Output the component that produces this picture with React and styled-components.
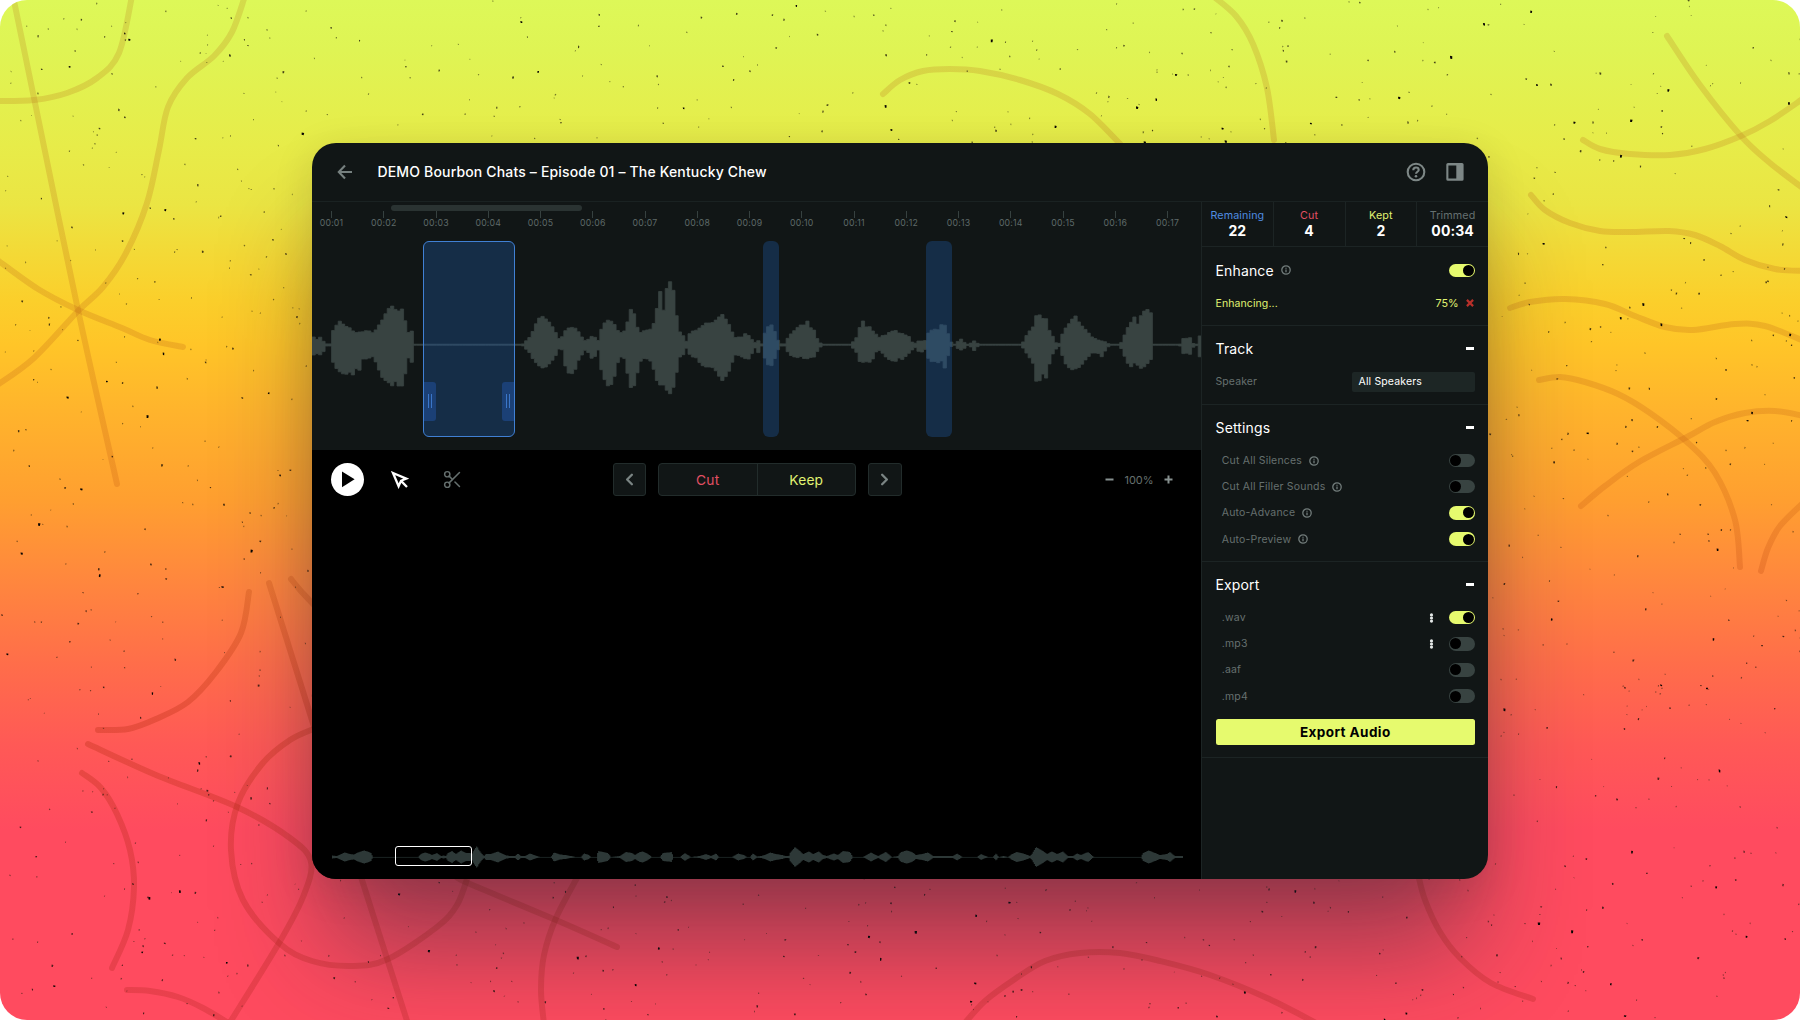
import React from "react";
import styled, { createGlobalStyle } from "styled-components";
import { Scissors, ChevronLeft, ChevronRight } from "lucide-react";

/* ---------- data ---------- */

const times = Array.from({ length: 17 }, (_, i) => `00:${String(i + 1).padStart(2, "0")}`);

// [x, height above the line, height below the line]
const wave = [
  [0, 8, 10], [3, 8, 10], [6, 4, 8], [8, 8, 10], [12, 3, 6], [14, 1, 1], [19, 1, 1],
  [20, 12, 14], [23, 18, 22], [28, 24, 27], [33, 19, 30], [38, 17, 27], [41, 14, 30], [45, 12, 22], [47, 13, 27],
  [50, 13, 14], [56, 15, 14], [60, 12, 11], [63, 14, 15], [67, 20, 25], [71, 26, 34], [76, 36, 37], [80, 39, 41],
  [83, 36, 36], [86, 33, 41], [88, 36, 41], [91, 36, 41], [93, 25, 30], [96, 12, 12], [99, 15, 18], [101, 12, 16],
  [102.5, 0, 0], [210, 0, 0],
  [213, 3, 3], [218, 8, 8], [221, 14, 14], [226, 26, 20], [230, 29, 23], [234, 26, 22], [238, 22, 18], [243, 14, 12],
  [246, 6, 4], [250, 8, 4], [253, 14, 20], [258, 18, 31], [263, 17, 25], [266, 14, 16], [271, 6, 8], [274, 4, 4],
  [278, 7, 10], [281, 10, 16], [285, 5, 6], [286, 4, 4], [288, 12, 20], [291, 20, 30], [295, 25, 41], [299, 24, 40],
  [303, 20, 30], [307, 12, 12], [312, 13, 12], [314, 20, 22], [316, 24, 30], [318, 34, 42], [321, 40, 44],
  [323, 24, 38], [326, 16, 25], [329, 12, 15], [333, 15, 13], [338, 15, 15], [342, 22, 25], [344, 36, 33],
  [346, 37, 38], [348, 54, 40], [350, 50, 40], [352, 30, 40], [354, 52, 43], [356.5, 66, 50], [360, 60, 47],
  [362, 52, 40], [364, 36, 34], [366, 14, 12], [368, 13, 12], [370, 19, 20], [372, 2, 2], [374, 2, 2],
  [376, 10, 8], [381, 14, 12], [385, 15, 13], [389, 18, 20], [394, 22, 22], [400, 22, 22], [404, 25, 26],
  [410, 31, 36], [415, 24, 30], [419, 17, 22], [422, 7, 10], [426, 8, 10], [430, 8, 12], [434, 12, 14],
  [438, 8, 14], [441, 4, 5], [444, 2, 2], [446, 5, 9], [448, 1, 1], [450, 1, 1],
  [451, 8, 8], [454, 14, 16], [458, 22, 23], [461, 18, 18], [464, 10, 10], [467, 2, 2],
  [472, 0, 0], [474, 4, 4], [478, 10, 10], [485, 17, 13], [488, 20, 11], [493, 20, 14], [495, 25, 14], [498, 17, 12],
  [501, 18, 14], [504, 8, 8], [507, 4, 4], [510, 0, 0], [539, 0, 0],
  [541, 3, 3], [545, 8, 8], [547, 14, 16], [550, 28, 18], [553, 16, 16], [556, 21, 18], [560, 14, 16], [563, 14, 8],
  [566, 5, 5], [569, 11, 6], [572, 8, 10], [576, 12, 14], [583, 15, 17], [587, 12, 13], [589, 14, 16], [592, 8, 12],
  [595, 12, 11], [597, 8, 8], [600, 3, 5], [602, 0, 0], [605, 4, 6], [610, 4, 7], [612, 1, 1],
  [615, 10, 10], [618, 14, 17], [622, 16, 16], [626, 15, 18], [629, 20, 14], [632, 22, 26], [635, 13, 14],
  [638, 8, 4], [640, 0, 0], [643, 0, 0], [645, 3, 3], [649, 6, 5], [653, 2, 3], [656, 0, 0], [659, 2, 2],
  [661, 5, 7], [665, 2, 2], [668, 0, 0], [710, 0, 0],
  [712, 5, 5], [716, 12, 10], [721, 18, 18], [724, 29, 36], [727, 32, 38], [730, 22, 26], [733, 38, 37],
  [735, 17, 30], [738, 14, 16], [741, 8, 8], [744, 2, 4], [747, 1, 1], [749, 8, 6], [753, 16, 18], [759, 24, 25],
  [763, 30, 24], [768, 21, 22], [774, 15, 14], [780, 8, 8], [786, 5, 8], [790, 4, 12], [794, 3, 4], [798, 0, 0],
  [808, 0, 0], [811, 6, 8], [815, 16, 16], [818, 21, 24], [820, 24, 20], [822, 32, 18], [824, 12, 18],
  [827, 28, 22], [830, 30, 24], [834, 37, 20], [838, 33, 16], [839, 32, 14], [840, 0, 0], [868, 0, 0],
  [870, 8, 11], [873, 5, 6], [877, 9, 11], [880, 4, 6], [882, 0, 0], [886, 1, 1], [888, 10, 13], [890, 10, 13],
];

// [x, half height]
const overview = [
  [0, 1.5], [5, 1], [9, 3], [13, 4.5], [18, 3], [22, 2.5], [26, 4.5], [32, 6.5], [37, 5], [39, 4], [41, 0], [86, 0],
  [89, 3], [93, 4.5], [98, 3], [100, 2], [105, 4], [109, 1], [112, 1.5], [114, 1], [116, 4], [120, 6], [124, 3],
  [129, 6.5], [134, 4], [138, 4], [140, 3], [142, 7], [145, 11], [147, 7], [150, 3], [152, 1], [154, 3], [159, 3],
  [166, 5.5], [171, 3], [174, 1.5], [179, 1], [183, 1], [186, 3.5], [189, 1], [193, 1], [198, 3.5], [205, 1], [208, 0],
  [219, 0], [222, 4.5], [228, 2.5], [233, 2], [239, 1], [244, 0], [249, 0], [252, 3.5], [257, 2], [259, 0], [265, 0],
  [266, 6], [271, 5], [276, 4], [279, 0], [288, 1], [294, 5], [300, 4], [303, 2], [308, 5], [311, 5.5], [316, 3],
  [320, 0], [328, 0], [331, 4], [336, 4.5], [340, 5], [341, 0], [348, 0], [353, 4], [359, 0], [368, 1],
  [374, 3], [379, 1], [384, 3.5], [387, 0], [400, 0], [406, 3.5], [412, 2], [415, 0], [418, 0], [421, 3.5], [425, 0.5],
  [429, 1], [433, 2], [438, 4.5], [444, 3], [450, 2], [454, 1], [457, 1], [458, 4], [463, 10], [468, 6], [471, 3],
  [477, 5.5], [481, 3], [487, 5.5], [491, 2], [495, 1], [502, 3.5], [506, 2], [511, 6], [518, 5], [521, 0], [531, 0],
  [539, 4.5], [546, 1], [554, 5], [560, 0], [566, 1], [569, 5], [575, 6.5], [580, 5], [584, 2], [590, 3], [596, 4.5],
  [601, 1], [613, 1], [621, 1], [625, 3.5], [629, 1], [631, 0], [645, 0], [649, 3], [656, 0], [661, 0], [664, 3.5],
  [667, 0], [672, 1], [676, 0], [680, 3], [685, 5], [693, 3], [698, 1], [700, 3], [704, 10], [711, 6], [715, 3],
  [720, 5.5], [725, 3], [731, 5.5], [736, 1], [741, 1], [745, 3.5], [749, 2], [756, 5], [762, 0], [809, 0], [811, 4],
  [817, 6.5], [823, 4], [828, 2], [835, 3], [838, 5], [843, 1], [847, 1], [851, 1],
].map(([x, h]) => [x, h, h]);

const squiggles = [
  [[13, -4], [34, 98], [78, 310], [117, 484]],
  [[132, -4], [119, 53], [97, 78], [67, 93], [34, 100], [-4, 101]],
  [[245, -4], [232, 32], [214, 56], [187, 78], [168, 107], [159, 150], [147, 203], [126, 253], [103, 287], [78, 311], [34, 358], [-4, 386]],
  [[-4, 259], [38, 289], [78, 310], [122, 328], [150, 340], [183, 347]],
  [[249, 592], [241, 633], [216, 672], [188, 702], [156, 719], [128, 729], [98, 730]],
  [[269, 583], [311, 717], [362, 880], [408, 1024]],
  [[291, 579], [300, 590], [314, 605]],
  [[88, 744], [156, 775], [237, 807], [290, 838], [311, 862], [303, 897], [279, 943], [229, 1024]],
  [[316, 728], [290, 740], [262, 764], [238, 803], [231, 850], [243, 900], [279, 943], [312, 961], [353, 966], [388, 959], [437, 927], [457, 905], [468, 876]],
  [[82, 773], [101, 788], [117, 814], [130, 850], [134, 887], [128, 930], [112, 968]],
  [[127, 990], [150, 991], [178, 997], [203, 1008], [230, 1024]],
  [[455, 876], [470, 884], [556, 920], [617, 947]],
  [[578, 876], [556, 918], [544, 955], [541, 990], [544, 1024]],
  [[883, 94], [900, 80], [923, 71], [950, 69], [980, 71], [1020, 80], [1058, 94], [1090, 114], [1122, 146]],
  [[1213, -4], [1236, 16], [1253, 44], [1267, 88], [1274, 140]],
  [[1667, 36], [1700, 85], [1741, 136], [1770, 163], [1804, 189]],
  [[1583, 140], [1600, 149], [1630, 154], [1670, 155], [1705, 149], [1741, 136], [1770, 121], [1804, 98]],
  [[1531, 195], [1545, 210], [1570, 223], [1600, 231], [1630, 232], [1669, 231], [1695, 235], [1720, 246], [1745, 260], [1775, 269], [1804, 271]],
  [[1510, 308], [1530, 302], [1565, 299], [1605, 304], [1635, 316], [1665, 327], [1693, 330], [1735, 324], [1765, 326], [1804, 341]],
  [[1539, 380], [1560, 377], [1585, 382], [1618, 394], [1650, 413], [1687, 442], [1715, 473], [1735, 520], [1740, 567]],
  [[1581, 506], [1605, 486], [1639, 462], [1687, 437], [1715, 422], [1745, 413], [1775, 411], [1804, 416]],
  [[1761, 571], [1768, 548], [1780, 526], [1804, 502]],
  [[964, 1024], [985, 1001], [1015, 979], [1045, 961], [1080, 953], [1120, 953], [1160, 961], [1210, 975], [1267, 998], [1318, 1024]],
  [[1418, 874], [1425, 900], [1440, 932], [1460, 958], [1491, 983], [1533, 999]],
];

const stats = [
  { label: "Remaining", value: "22", color: "#4f8ce0" },
  { label: "Cut", value: "4", color: "#e04f63" },
  { label: "Kept", value: "2", color: "#e0f272" },
  { label: "Trimmed", value: "00:34", color: "#657070" },
];

const settings = [
  { label: "Cut All Silences", on: false },
  { label: "Cut All Filler Sounds", on: false },
  { label: "Auto-Advance", on: true },
  { label: "Auto-Preview", on: true },
];

const formats = [
  { label: ".wav", on: true, more: true },
  { label: ".mp3", on: false, more: true },
  { label: ".aaf", on: false },
  { label: ".mp4", on: false },
];

/* ---------- path helpers ---------- */

const sample = (points, x) => {
  for (let i = 1; i < points.length; i++) {
    const [x0, u0, d0] = points[i - 1];
    const [x1, u1, d1] = points[i];
    if (x <= x1) {
      const t = (x - x0) / (x1 - x0);
      return [u0 + (u1 - u0) * t, d0 + (d1 - d0) * t];
    }
  }
  return [0, 0];
};

const steppedPath = (points, width, step, mid) => {
  let top = "";
  let bottom = "";
  for (let x = 0; x < width; x += step) {
    const [u, d] = sample(points, x + step / 2);
    const a = x.toFixed(1);
    const b = (x + step).toFixed(1);
    top += `L${a} ${(mid - u).toFixed(1)}L${b} ${(mid - u).toFixed(1)}`;
    bottom = `L${b} ${(mid + d).toFixed(1)}L${a} ${(mid + d).toFixed(1)}` + bottom;
  }
  return `M0 ${mid}${top}${bottom}Z`;
};

const smoothPath = (p) => {
  let d = `M${p[0][0]} ${p[0][1]}`;
  for (let i = 0; i < p.length - 1; i++) {
    const a = p[i - 1] || p[i];
    const b = p[i];
    const c = p[i + 1];
    const e = p[i + 2] || c;
    d += `C${b[0] + (c[0] - a[0]) / 6} ${b[1] + (c[1] - a[1]) / 6} ${c[0] - (e[0] - b[0]) / 6} ${c[1] - (e[1] - b[1]) / 6} ${c[0]} ${c[1]}`;
  }
  return d;
};

const specks = (count, size, seed) => {
  let s = seed;
  const rnd = () => {
    s = (s * 16807) % 2147483647;
    return s / 2147483647;
  };
  let d = "";
  for (let i = 0; i < count; i++) {
    const w = size * (0.7 + rnd() * 0.6);
    const h = size * (0.7 + rnd() * 0.7);
    d += `M${(rnd() * 1800).toFixed(1)} ${(rnd() * 1020).toFixed(1)}l${w.toFixed(1)} ${(rnd() * 0.6).toFixed(1)}l${(-rnd() * 0.7).toFixed(1)} ${h.toFixed(1)}l${(-w * 0.8).toFixed(1)} ${(-rnd() * 0.5).toFixed(1)}z`;
  }
  return d;
};

const wavePath = steppedPath(wave, 890, 3.27, 117);
const overviewPath = steppedPath(overview, 851, 1.1, 12);
const fineSpecks = specks(1250, 1.1, 7919);
const midSpecks = specks(640, 1.5, 104729);
const boldSpecks = specks(190, 1.9, 31337);

/* ---------- icons ---------- */

const BackIcon = () => (
  <svg width="16" height="16" viewBox="0 0 16 16" fill="none" stroke="#76807f" strokeWidth="2.1">
    <path d="M15 8H2.5M8 1.6L1.8 8L8 14.4" />
  </svg>
);

const HelpIcon = () => (
  <svg width="20" height="20" viewBox="0 0 20 20" fill="none" stroke="#7d8786" strokeWidth="2.1">
    <circle cx="10" cy="10" r="8.3" />
    <path d="M7.3 8.2C7.3 6.5 8.5 5.5 10 5.5S12.7 6.5 12.7 7.9C12.7 9.6 10 9.9 10 11.8" />
    <circle cx="10" cy="14.2" r="1.3" fill="#7d8786" stroke="none" />
  </svg>
);

const PanelIcon = () => (
  <svg width="18" height="18" viewBox="0 0 18 18">
    <path fillRule="evenodd" fill="#7d8786" d="M2 0H16Q17.6 0 17.6 1.6V16.2Q17.6 17.8 16 17.8H2Q.3 17.8 .3 16.2V1.6Q.3 0 2 0ZM2.4 2.4V15.4H10.3V2.4Z" />
  </svg>
);

const InfoIcon = () => (
  <svg width="10" height="10" viewBox="0 0 10 10" fill="none" stroke="#727c7b" strokeWidth="1.3">
    <circle cx="5" cy="5" r="4.2" />
    <path d="M5 4.5V7.3M5 2.7V3.8" />
  </svg>
);

const MoreIcon = () => (
  <svg width="5" height="10" viewBox="0 0 5 10" fill="#e4e8e7">
    <circle cx="2.5" cy="1.9" r="1.6" />
    <circle cx="2.5" cy="5" r="1.6" />
    <circle cx="2.5" cy="8.1" r="1.6" />
  </svg>
);

const CloseIcon = () => (
  <svg width="8" height="8" viewBox="0 0 8 8" stroke="#b8302a" strokeWidth="2.2">
    <path d="M.9 .9L7.1 7.1M7.1 .9L.9 7.1" />
  </svg>
);

const PlayIcon = () => (
  <svg width="13" height="17" viewBox="0 0 13 17">
    <path d="M0 .4L12.6 8.3L0 16.2Z" />
  </svg>
);

const CursorIcon = () => (
  <svg width="18" height="18" viewBox="0 0 18 18" fill="none" stroke="#fff" strokeWidth="2.3">
    <path d="M2 2L15.2 7.6L10 9.8L7.6 15.2ZM9.8 9.6L16 16" />
  </svg>
);

const StepIcon = ({ plus }) => (
  <svg width="9" height="9" viewBox="0 0 9 9" stroke="#879190" strokeWidth="2">
    <path d={plus ? "M.5 4.5H8.5M4.5 .5V8.5" : "M.5 4.5H8.5"} />
  </svg>
);

/* ---------- parts ---------- */

const Switch = ({ on }) => (
  <Toggle $on={on}>
    <Knob />
  </Toggle>
);

const Section = ({ title, info, toggle, children }) => (
  <Panel>
    <PanelHead>
      <PanelTitle>{title}</PanelTitle>
      {info && <InfoIcon />}
      <Spacer />
      {toggle ? <Switch on /> : <Dash />}
    </PanelHead>
    {children}
  </Panel>
);

const Backdrop = () => (
  <Art viewBox="0 0 1800 1020">
    <defs>
      <linearGradient id="ink" gradientUnits="userSpaceOnUse" x1="0" y1="0" x2="0" y2="1020">
        <stop offset="0" stopColor="#b88020" stopOpacity=".24" />
        <stop offset=".5" stopColor="#c85c10" stopOpacity=".26" />
        <stop offset=".7" stopColor="#b82c10" stopOpacity=".32" />
        <stop offset="1" stopColor="#a82018" stopOpacity=".25" />
      </linearGradient>
    </defs>
    <g fill="none" stroke="url(#ink)" strokeWidth="6" strokeLinecap="round">
      {squiggles.map((points, i) => (
        <path key={i} d={smoothPath(points)} />
      ))}
    </g>
    <path d={fineSpecks} fill="#1c1808" opacity=".55" />
    <path d={midSpecks} fill="#140c04" opacity=".75" />
    <path d={boldSpecks} fill="#080402" />
  </Art>
);

const App = () => {
  return (
    <Page>
      <GlobalStyle />
      <Backdrop />
      <Window>
        <Header>
          <BackIcon />
          <Title>DEMO Bourbon Chats – Episode 01 – The Kentucky Chew</Title>
          <Spacer />
          <HeaderIcons>
            <HelpIcon />
            <PanelIcon />
          </HeaderIcons>
        </Header>
        <Body>
          <Editor>
            <WavePanel>
              <Ruler>
                <ScrollThumb />
                <Ticks>
                  {times.map((t) => (
                    <Tick key={t}>{t}</Tick>
                  ))}
                </Ticks>
              </Ruler>
              <Track>
                <svg width="889" height="221" viewBox="0 0 889 221">
                  <path d="M0 116.5H889" stroke="#384341" strokeWidth="1.5" />
                  <path d={wavePath} fill="#384341" stroke="#384341" strokeWidth=".8" strokeLinejoin="round" />
                </svg>
                <Region $x={451} $w={16} />
                <Region $x={614} $w={26} />
                <Region $x={111} $w={92} $active>
                  <Handle $side="left" />
                  <Handle $side="right" />
                </Region>
              </Track>
            </WavePanel>
            <Toolbar>
              <Tools>
                <PlayButton>
                  <PlayIcon />
                </PlayButton>
                <CursorIcon />
                <Scissors size={21} color="#66706f" strokeWidth={1.7} />
              </Tools>
              <Decide>
                <NavButton>
                  <ChevronLeft size={19} strokeWidth={3} />
                </NavButton>
                <Choice>
                  <Option $color="#e04f63">Cut</Option>
                  <Option $color="#e0f272">Keep</Option>
                </Choice>
                <NavButton>
                  <ChevronRight size={19} strokeWidth={3} />
                </NavButton>
              </Decide>
              <Zoom>
                <StepIcon />
                <ZoomValue>100%</ZoomValue>
                <StepIcon plus />
              </Zoom>
            </Toolbar>
            <Spacer />
            <Overview>
              <svg width="851" height="24" viewBox="0 0 851 24">
                <path d="M0 12.4H851" stroke="#1a2322" strokeWidth="1" />
                <path d={overviewPath} fill="#2d3837" />
              </svg>
              <Viewport />
            </Overview>
          </Editor>
          <Sidebar>
            <Stats>
              {stats.map((s) => (
                <Stat key={s.label}>
                  <StatLabel $color={s.color}>{s.label}</StatLabel>
                  <StatValue>{s.value}</StatValue>
                </Stat>
              ))}
            </Stats>
            <Section title="Enhance" info toggle>
              <EnhanceRow>
                Enhancing...
                <Spacer />
                <Percent>75%</Percent>
                <CloseIcon />
              </EnhanceRow>
            </Section>
            <Section title="Track">
              <SpeakerRow>
                Speaker
                <Spacer />
                <Select>All Speakers</Select>
              </SpeakerRow>
            </Section>
            <Section title="Settings">
              {settings.map((s) => (
                <OptionRow key={s.label}>
                  {s.label}
                  <InfoIcon />
                  <Spacer />
                  <Switch on={s.on} />
                </OptionRow>
              ))}
            </Section>
            <Section title="Export">
              {formats.map((f) => (
                <OptionRow key={f.label}>
                  {f.label}
                  <Spacer />
                  {f.more && <MoreIcon />}
                  <Switch on={f.on} />
                </OptionRow>
              ))}
              <ExportButton>Export Audio</ExportButton>
            </Section>
          </Sidebar>
        </Body>
      </Window>
    </Page>
  );
};

export default App;

const GlobalStyle = createGlobalStyle`
  * {
    box-sizing: border-box;
  }
  body {
    margin: 0;
    background: #fff;
    font-family: Inter, "Liberation Sans", sans-serif;
  }
  svg {
    display: block;
    flex: none;
  }
`;

const Page = styled.div`
  position: relative;
  width: 1800px;
  height: 1020px;
  padding: 142.5px 312px 0;
  border-radius: 27px;
  overflow: hidden;
  background: linear-gradient(
    #ddf858 0,
    #dff454 50px,
    #e7ec49 145px,
    #ebe543 205px,
    #f3da37 250px,
    #fbcf2b 300px,
    #ffc528 345px,
    #ffb42c 410px,
    #ff9f30 500px,
    #ff8a3c 570px,
    #ff6d4a 665px,
    #ff5956 745px,
    #ff4b5f 830px,
    #ff4b5f 1020px
  );
`;
const Art = styled.svg`
  position: absolute;
  inset: 0;
  width: 1800px;
  height: 1020px;
`;

const Window = styled.div`
  position: relative;
  width: 1176px;
  height: 736.5px;
  display: flex;
  flex-direction: column;
  border-radius: 24px;
  overflow: hidden;
  background: #111616;
  color: #fff;
  box-shadow: 0 84px 110px -16px rgba(28, 34, 54, 0.44), 0 10px 40px rgba(40, 30, 20, 0.14);
`;

const Header = styled.div`
  height: 59px;
  flex: none;
  display: flex;
  align-items: center;
  padding: 0 24px 0 25px;
  border-bottom: 1.5px solid #1a2222;
`;
const Title = styled.div`
  margin-left: 24.5px;
  font-size: 14px;
  font-weight: 500;
  letter-spacing: 0.16px;
`;
const HeaderIcons = styled.div`
  display: flex;
  align-items: center;
  gap: 20px;
`;
const Spacer = styled.div`
  flex: 1;
`;

const Body = styled.div`
  flex: 1;
  min-height: 0;
  display: flex;
`;
const Editor = styled.div`
  width: 889px;
  flex: none;
  display: flex;
  flex-direction: column;
  background: #000;
`;
const WavePanel = styled.div`
  height: 248.5px;
  background: #111616;
  overflow: hidden;
`;
const Ruler = styled.div`
  height: 26.5px;
  padding-top: 3px;
`;
const ScrollThumb = styled.div`
  width: 191px;
  height: 6.5px;
  margin-left: 78.5px;
  border-radius: 3px;
  background: #2a3332;
`;
const Ticks = styled.div`
  display: flex;
  margin-left: -6.6px;
`;
const Tick = styled.div`
  width: 52.26px;
  flex: none;
  display: flex;
  flex-direction: column;
  align-items: center;
  font-size: 8.75px;
  line-height: 11px;
  letter-spacing: 0.2px;
  color: #5f6a69;

  &::before {
    content: "";
    width: 1px;
    height: 6.5px;
    background: #364140;
  }
`;
const Track = styled.div`
  position: relative;
  height: 221px;
`;
const Region = styled.div`
  position: absolute;
  top: 13px;
  left: ${(p) => p.$x}px;
  width: ${(p) => p.$w}px;
  height: 196px;
  border-radius: 6px;
  background: rgba(30, 91, 166, 0.34);
  border: ${(p) => (p.$active ? "1.5px solid #4080d4" : "none")};
  overflow: hidden;
`;
const Handle = styled.div`
  position: absolute;
  top: 139.5px;
  ${(p) => p.$side}: 0;
  width: 12px;
  height: 39.5px;
  display: flex;
  justify-content: center;
  align-items: center;
  gap: 2px;
  border-radius: ${(p) => (p.$side === "left" ? "0 3px 3px 0" : "3px 0 0 3px")};
  background: #1b4076;

  &::before,
  &::after {
    content: "";
    width: 1px;
    height: 14px;
    background: #3b76c8;
  }
`;

const Toolbar = styled.div`
  height: 59px;
  display: grid;
  grid-template-columns: 1fr auto 1fr;
  align-items: center;
  padding: 0 28px 0 19px;
`;
const Tools = styled.div`
  display: flex;
  align-items: center;

  svg + svg {
    margin-left: 33px;
  }
`;
const PlayButton = styled.div`
  width: 33px;
  height: 33px;
  margin-right: 26.5px;
  padding-left: 2px;
  display: flex;
  align-items: center;
  justify-content: center;
  border-radius: 50%;
  background: #fff;
`;
const Decide = styled.div`
  display: flex;
  gap: 12px;
  margin-left: 10px;
`;
const NavButton = styled.div`
  width: 33.5px;
  height: 33.5px;
  display: flex;
  align-items: center;
  justify-content: center;
  border: 1.5px solid #222c2b;
  border-radius: 3px;
  background: #111616;
  color: #7a8483;
`;
const Choice = styled.div`
  width: 198px;
  display: flex;
  border: 1.5px solid #222c2b;
  border-radius: 4px;
  background: #111616;
`;
const Option = styled.div`
  flex: 1;
  display: flex;
  align-items: center;
  justify-content: center;
  font-size: 13.75px;
  letter-spacing: 0.2px;
  color: ${(p) => p.$color};

  & + & {
    border-left: 1px solid #222c2b;
  }
`;
const Zoom = styled.div`
  display: flex;
  align-items: center;
  justify-content: flex-end;
  gap: 9.5px;
`;
const ZoomValue = styled.div`
  width: 31px;
  text-align: center;
  font-size: 11px;
  letter-spacing: -0.1px;
  color: #66706f;
`;

const Overview = styled.div`
  position: relative;
  padding: 0 19px 10px 20px;
`;
const Viewport = styled.div`
  position: absolute;
  left: 82.5px;
  top: 1px;
  width: 77.5px;
  height: 20px;
  border: 1.5px solid #fff;
  border-radius: 3px;
`;

const Sidebar = styled.div`
  flex: 1;
  display: flex;
  flex-direction: column;
  border-left: 1px solid #1c2424;
`;
const Stats = styled.div`
  height: 45.75px;
  flex: none;
  display: flex;
  border-bottom: 1px solid #1c2424;
`;
const Stat = styled.div`
  flex: 1;
  min-width: 0;
  display: flex;
  flex-direction: column;
  align-items: center;
  padding-top: 6px;

  & + & {
    border-left: 1px solid #1c2424;
  }
`;
const StatLabel = styled.div`
  font-size: 10.75px;
  line-height: 15px;
  letter-spacing: 0.1px;
  color: ${(p) => p.$color};
`;
const StatValue = styled.div`
  font-size: 14px;
  font-weight: 700;
  line-height: 16px;
  letter-spacing: 0.1px;
`;

const Panel = styled.div`
  padding: 7px 13px 8.5px 13.5px;
  border-bottom: 1px solid #1c2424;
`;
const PanelHead = styled.div`
  height: 32px;
  margin-bottom: 4px;
  display: flex;
  align-items: center;
  gap: 7px;
`;
const PanelTitle = styled.div`
  font-size: 14px;
  letter-spacing: 0.15px;
`;
const Dash = styled.div`
  width: 8px;
  height: 3px;
  margin-right: 1px;
  background: #fff;
`;
const Toggle = styled.div`
  width: 26px;
  height: 13.5px;
  padding: 1.25px;
  display: flex;
  flex: none;
  justify-content: ${(p) => (p.$on ? "flex-end" : "flex-start")};
  border-radius: 7px;
  background: ${(p) => (p.$on ? "#e6fa6e" : "#384341")};
`;
const Knob = styled.div`
  width: 11px;
  height: 11px;
  border-radius: 50%;
  background: #000;
`;

const FieldRow = styled.div`
  height: 26.15px;
  display: flex;
  align-items: center;
  font-size: 10.5px;
  letter-spacing: 0.18px;
  color: #66706f;
`;
const EnhanceRow = styled(FieldRow)`
  letter-spacing: 0.1px;
  color: #e0f272;
  padding-right: 1px;
`;
const Percent = styled.div`
  margin-right: 7.5px;
  font-size: 10.75px;
  letter-spacing: 0;
`;
const SpeakerRow = styled(FieldRow)`
  letter-spacing: 0.1px;
`;
const OptionRow = styled(FieldRow)`
  padding-left: 6.25px;
  gap: 7px;

  svg + ${Toggle} {
    margin-left: 8.5px;
  }
`;
const Select = styled.div`
  width: 123px;
  height: 20px;
  padding-left: 6.5px;
  border-radius: 2px;
  background: #1d2625;
  color: #fff;
  letter-spacing: 0.15px;
  line-height: 20px;
`;
const ExportButton = styled.div`
  height: 26px;
  margin: 9.5px 0 4px;
  display: flex;
  align-items: center;
  justify-content: center;
  border-radius: 2.5px;
  background: #e6fa6e;
  color: #000;
  font-size: 13.5px;
  font-weight: 700;
  letter-spacing: 0.42px;
`;
